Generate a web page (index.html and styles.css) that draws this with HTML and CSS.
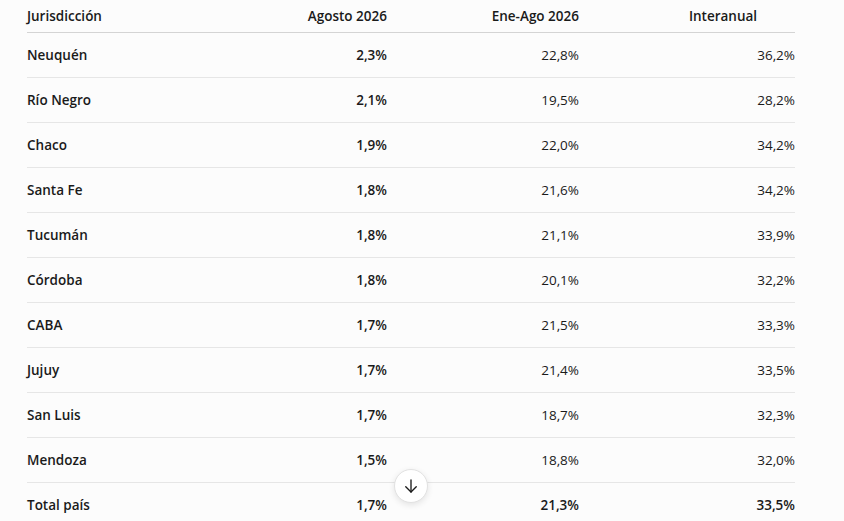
FILE: index.html
```html
<!DOCTYPE html>
<html lang="es">
<head>
<meta charset="utf-8">
<link rel="stylesheet" href="styles.css">
</head>
<body>
<div class="page">
  <div class="table">
    <div class="row head">
      <div class="c1">Jurisdicción</div>
      <div class="c2">Agosto 2026</div>
      <div class="c3">Ene-Ago 2026</div>
      <div class="c4 hc">Interanual</div>
    </div>
    <div class="row"><div class="c1 b">Neuquén</div><div class="c2 b">2,3%</div><div class="c3">22,8%</div><div class="c4">36,2%</div></div>
    <div class="row"><div class="c1 b">Río Negro</div><div class="c2 b">2,1%</div><div class="c3">19,5%</div><div class="c4">28,2%</div></div>
    <div class="row"><div class="c1 b">Chaco</div><div class="c2 b">1,9%</div><div class="c3">22,0%</div><div class="c4">34,2%</div></div>
    <div class="row"><div class="c1 b">Santa Fe</div><div class="c2 b">1,8%</div><div class="c3">21,6%</div><div class="c4">34,2%</div></div>
    <div class="row"><div class="c1 b">Tucumán</div><div class="c2 b">1,8%</div><div class="c3">21,1%</div><div class="c4">33,9%</div></div>
    <div class="row"><div class="c1 b">Córdoba</div><div class="c2 b">1,8%</div><div class="c3">20,1%</div><div class="c4">32,2%</div></div>
    <div class="row"><div class="c1 b">CABA</div><div class="c2 b">1,7%</div><div class="c3">21,5%</div><div class="c4">33,3%</div></div>
    <div class="row"><div class="c1 b">Jujuy</div><div class="c2 b">1,7%</div><div class="c3">21,4%</div><div class="c4">33,5%</div></div>
    <div class="row"><div class="c1 b">San Luis</div><div class="c2 b">1,7%</div><div class="c3">18,7%</div><div class="c4">32,3%</div></div>
    <div class="row"><div class="c1 b">Mendoza</div><div class="c2 b">1,5%</div><div class="c3">18,8%</div><div class="c4">32,0%</div></div>
    <div class="row total"><div class="c1 b">Total país</div><div class="c2 b">1,7%</div><div class="c3 b">21,3%</div><div class="c4 b">33,5%</div></div>
  </div>
  <button class="scroll-btn" aria-label="Desplazar hacia abajo">
    <svg width="18" height="18" viewBox="0 0 24 24" fill="none" stroke="#1a1a1a" stroke-width="1.8" stroke-linecap="round" stroke-linejoin="round"><path d="M12 4v16"/><path d="M5 13l7 7 7-7"/></svg>
  </button>
</div>
</body>
</html>
```

FILE: styles.css
```css
html, body {
  margin: 0;
  padding: 0;
  background: #fcfcfc;
}
body {
  font-family: "Open Sans", "Noto Sans", "Liberation Sans", sans-serif;
  font-size: 13.5px;
  color: #1a1a1a;
  overflow: hidden;
  height: 521px;
}
.page {
  position: relative;
  padding-left: 27px;
}
.table {
  width: 768px;
}
.row {
  display: grid;
  grid-template-columns: 168px 192px 192px 216px;
  height: 45px;
  align-items: center;
  border-bottom: 1px solid #e6e6e6;
  box-sizing: border-box;
}
.row.total {
  border-bottom: none;
  padding-bottom: 2px;
}
.row.head {
  height: 33px;
  border-bottom: 1px solid #d4d4d4;
  font-weight: 600;
  padding-bottom: 1px;
}
.c1 { text-align: left; }
.c2, .c3, .c4 { text-align: right; }
.c4.hc { text-align: center; padding-left: 72px; }
.b { font-weight: 600; }
.scroll-btn {
  position: absolute;
  left: 394px;
  top: 469px;
  width: 34px;
  height: 34px;
  border-radius: 50%;
  border: 1px solid #e2e2e2;
  background: #ffffff;
  box-shadow: 0 2px 6px rgba(0,0,0,0.10);
  display: flex;
  align-items: center;
  justify-content: center;
  padding: 0;
  cursor: pointer;
}
```
